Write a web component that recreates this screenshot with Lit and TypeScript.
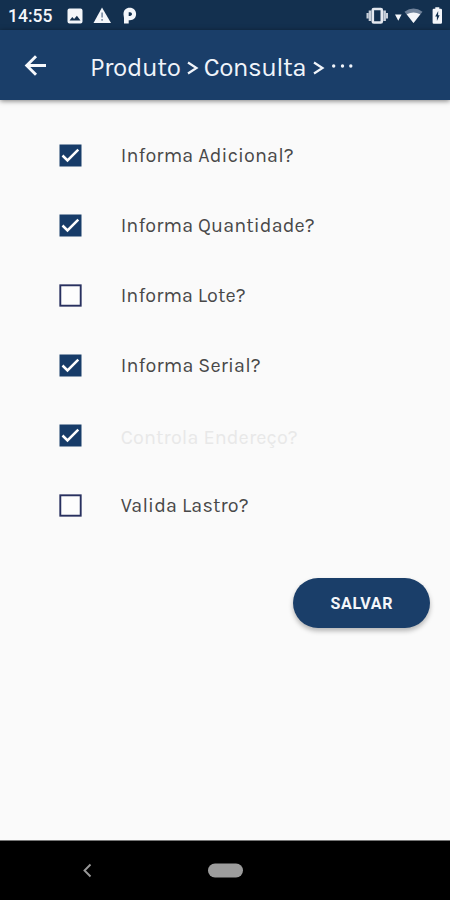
import { LitElement, html, css, svg } from "lit";
import { customElement, property } from "lit/decorators.js";

@customElement("status-bar")
class StatusBar extends LitElement {
  static styles = css`
    :host { display: block; height: 30px; background: #13304f; color: #f4f6fa; }
    svg { display: block; }
    .time { font: 500 17.5px Roboto, sans-serif; fill: #f4f6fa; }
  `;
  render() {
    return html`<svg width="450" height="30" viewBox="0 0 450 30" fill="#f4f6fa">
      <text class="time" x="8" y="22.200" textLength="44.5">14:55</text>
      <path fill-rule="evenodd" d="M69.500 8.500h11a2 2 0 0 1 2 2v11a2 2 0 0 1-2 2h-11a2 2 0 0 1-2-2v-11a2 2 0 0 1 2-2zM69.500 20.500h11l-3.600-4.800-2.800 3.400-1.800-2.200z"/>
      <path d="M102 7.500 111 23H93.500z"/>
      <path d="M101.200 12.500h1.800v5h-1.800zM101.200 19h1.800v1.800h-1.800z" fill="#8796ab"/>
      <path fill-rule="evenodd" d="M123.500 14.500C123.500 10 126 7.800 129.700 7.800c3.800 0 6.400 2.600 6.400 6.200 0 3.800-2.600 6.200-6.200 6.200h-1.200V23.500h-4.700V18zM128.700 12.200v3.800h1.300c1.200 0 2-.8 2-1.900s-.8-1.900-1.900-1.900z"/>
      <rect x="372.800" y="9" width="9" height="13.500" rx="1" fill="none" stroke="#e4e8ef" stroke-width="2.600"/>
      <path d="M368.700 10.500h2.600v10.500h-2.600zM383.300 10.500h2.600v10.500h-2.600zM366.500 13h2v5.500h-2zM386 13h2v5.500h-2z" fill="#c9d0da"/>
      <path d="M395 14.500h6.600l-3.300 6.200z"/>
      <path d="M404.500 11.700Q413.500 5.500 422.500 11.700L413.500 23z" fill="#71839b"/>
      <path d="M406.700 14.300Q413.500 10.500 420.300 14.300L413.500 23z"/>
      <path d="M435.300 7.300h4v1.500h1.500q1.200 0 1.200 1.200v12.500q0 1.200-1.200 1.200h-7q-1.200 0-1.200-1.200V10q0-1.200 1.200-1.200h1.500z"/>
      <path d="m438.200 11-3 5.500h1.700v4.500l2.700-5.700h-1.500z" fill="#13304f"/>
    </svg>`;
  }
}

@customElement("check-row")
class CheckRow extends LitElement {
  @property() label = "";
  @property({ type: Boolean }) checked = false;
  @property({ type: Boolean }) dim = false;
  @property({ type: Number }) width = 0;
  static styles = css`
    :host { display: flex; align-items: center; height: 70px; padding-left: 59px; gap: 38px; }
    svg { display: block; flex: none; }
    .text { font: 400 19.800px Karla, Roboto, sans-serif; fill: #484848; }
    .dim { fill: #e8e8e8; }
  `;
  render() {
    return html`<svg width="23" height="23" viewBox="0 0 23 23">
        ${this.checked
          ? svg`<rect x=".5" y=".5" width="22" height="22" fill="#173c69"/><path d="m3.500 11.500 5 5L19.300 5.700" fill="none" stroke="#fff" stroke-width="2.500"/>`
          : svg`<rect x="1.300" y="1.300" width="20.400" height="20.400" fill="#fdfdfd" stroke="#28305f" stroke-width="1.900"/>`}
      </svg>
      <svg width="230" height="30">
        <text class="text ${this.dim ? "dim" : ""}" x=".7" y=${this.dim ? 24 : 22} textLength=${this.width}>${this.label}</text>
      </svg>`;
  }
}

@customElement("app-root")
class AppRoot extends LitElement {
  static styles = css`
    :host { display: flex; flex-direction: column; height: 900px; width: 450px; overflow: hidden; background: #fafafa; }
    header { height: 70px; flex: none; background: #1a3e69; box-shadow: 0 1px 5px rgba(0, 0, 0, 0.5); position: relative; }
    header svg { display: block; }
    .title { font: 400 26px Karla, Roboto, sans-serif; fill: #f0f4fa; }
    main { flex: 1; display: flex; flex-direction: column; padding-top: 20px; }
    button { align-self: flex-end; margin: 38px 20px 0 0; width: 137px; height: 50px; padding: 0; border: 0; border-radius: 25px; background: #1a3e69; box-shadow: 0 3px 5px rgba(0, 0, 0, 0.28); }
    button svg { display: block; }
    .save { font: 700 16px Roboto, sans-serif; fill: #f4f6fa; }
    nav { height: 59px; flex: none; background: #000; border-top: 1px solid #777; }
    nav svg { display: block; }
  `;
  private rows = [
    { label: "Informa Adicional?", checked: true, dim: false, width: 173 },
    { label: "Informa Quantidade?", checked: true, dim: false, width: 194 },
    { label: "Informa Lote?", checked: false, dim: false, width: 125 },
    { label: "Informa Serial?", checked: true, dim: false, width: 140 },
    { label: "Controla Endereço?", checked: true, dim: true, width: 177 },
    { label: "Valida Lastro?", checked: false, dim: false, width: 128 },
  ];
  render() {
    return html`<status-bar></status-bar>
      <header>
        <svg width="450" height="70" viewBox="0 0 450 70">
          <path d="M46 35.500H27.500M36 26.200l-9.300 9.300 9.300 9.300" fill="none" stroke="#f6f8fc" stroke-width="2.900"/>
          <g class="title">
            <text x="90" y="45.500" textLength="91">Produto</text>
            <text x="203.700" y="45.500" textLength="103">Consulta</text>
          </g>
          <path d="m188 32.500 8.500 5.500-8.500 5.500M314 32.500l8.500 5.500-8.500 5.500" fill="none" stroke="#f0f4fa" stroke-width="2.200"/>
          <g fill="#f0f4fa"><circle cx="333.700" cy="36" r="1.700"/><circle cx="342.500" cy="36" r="1.700"/><circle cx="350.800" cy="36" r="1.700"/></g>
        </svg>
      </header>
      <main>
        ${this.rows.map((r) => html`<check-row .label=${r.label} .checked=${r.checked} .dim=${r.dim} .width=${r.width}></check-row>`)}
        <button><svg width="137" height="50"><text class="save" x="37.500" y="31" textLength="62">SALVAR</text></svg></button>
      </main>
      <nav><svg width="450" height="59">
        <path d="m90.500 23.500-6 6 6 6" fill="none" stroke="#999" stroke-width="1.900"/>
        <rect x="208" y="22.500" width="35" height="14" rx="7" fill="#9c9c9c"/>
      </svg></nav>`;
  }
}
